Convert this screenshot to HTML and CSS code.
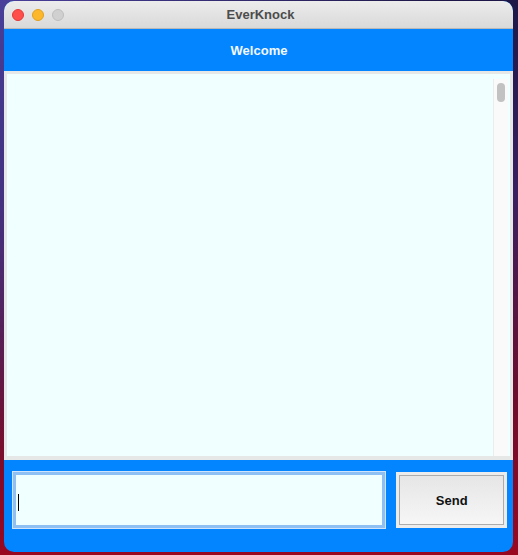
FILE: index.html
```html
<!DOCTYPE html>
<html>
<head>
<meta charset="utf-8">
<title>EverKnock</title>
<link rel="stylesheet" href="styles.css">
</head>
<body>
<div class="window">
  <div class="titlebar">
    <div class="lights">
      <span class="light red"></span>
      <span class="light yellow"></span>
      <span class="light gray"></span>
    </div>
    <div class="title">EverKnock</div>
  </div>
  <div class="header">Welcome</div>
  <div class="chat">
    <div class="chat-inner">
      <div class="scrolltrack"><div class="thumb"></div></div>
    </div>
  </div>
  <div class="bottom">
    <div class="input"><span class="caret"></span></div>
    <div class="send"><div class="send-inner">Send</div></div>
  </div>
</div>
</body>
</html>
```
FILE: styles.css
```css
html, body {
  margin: 0;
  padding: 0;
  width: 518px;
  height: 555px;
  overflow: hidden;
}
body {
  background:
    radial-gradient(ellipse at 0% 0%, #4a3f9a 0%, rgba(74,63,154,0) 60%),
    linear-gradient(180deg, #1d1848 0%, #3a2060 35%, #6a0e2e 70%, #9a0820 100%);
  font-family: "Liberation Sans", Arial, sans-serif;
}
.window {
  margin: 1px 0 0 4px;
  width: 509px;
  height: 551px;
  border-radius: 10px;
  overflow: hidden;
  display: flex;
  flex-direction: column;
  background: #0285ff;
}
.titlebar {
  height: 27px;
  flex: none;
  background: linear-gradient(180deg, #ececec 0%, #d9d9d9 100%);
  border-bottom: 1px solid #b8b8b8;
  display: flex;
  align-items: center;
  justify-content: center;
  position: relative;
}
.lights {
  position: absolute;
  left: 8px;
  top: 8px;
  display: flex;
  gap: 8px;
}
.light {
  width: 12px;
  height: 12px;
  border-radius: 50%;
  box-sizing: border-box;
}
.red { background: #fe4f4b; border: 1px solid #e2393a; }
.yellow { background: #fdb72a; border: 1px solid #dea021; }
.gray { background: #d0d0d0; border: 1px solid #bdbdbd; }
.title {
  font-weight: bold;
  font-size: 13px;
  color: #4c4c4c;
  margin-left: 4px;
}
.header {
  height: 42px;
  flex: none;
  background: #0285ff;
  color: #f4f8ff;
  font-weight: bold;
  font-size: 13px;
  display: flex;
  align-items: center;
  justify-content: center;
  padding-left: 1px;
}
.chat {
  height: 389px;
  flex: none;
  box-sizing: border-box;
  background: #e6e8e8;
  padding: 3px 3px 4px 3px;
}
.chat-inner {
  height: 100%;
  background: #f0ffff;
  display: flex;
  justify-content: flex-end;
  padding: 5px 2px 0 0;
  box-sizing: border-box;
}
.scrolltrack {
  width: 15px;
  height: 100%;
  background: #fafafa;
  border-left: 1px solid #ececec;
  box-sizing: border-box;
  padding: 4px 0 0 3px;
}
.thumb {
  width: 8px;
  height: 19px;
  border-radius: 4px;
  background: #c2c2c2;
}
.bottom {
  flex: 1;
  display: flex;
  align-items: flex-start;
  padding: 12px 6px 0 8px;
  gap: 11px;
}
.input {
  width: 374px;
  height: 56px;
  box-sizing: border-box;
  background: #f0ffff;
  border: 3px solid #8fc0f4;
  box-shadow: 0 0 0 1px #cfe4fb;
  display: flex;
  align-items: center;
  padding-left: 2px;
  margin-left: 1px;
}
.caret {
  width: 1px;
  height: 17px;
  background: #000;
  margin-top: 4px;
}
.send {
  width: 111px;
  height: 56px;
  box-sizing: border-box;
  background: #ececec;
  padding: 3px;
}
.send-inner {
  height: 100%;
  box-sizing: border-box;
  border: 1px solid #acacac;
  background: linear-gradient(180deg, #e6e6e6 0%, #f6f6f6 100%);
  display: flex;
  align-items: center;
  justify-content: center;
  font-weight: bold;
  font-size: 13px;
  color: #111;
}
```
